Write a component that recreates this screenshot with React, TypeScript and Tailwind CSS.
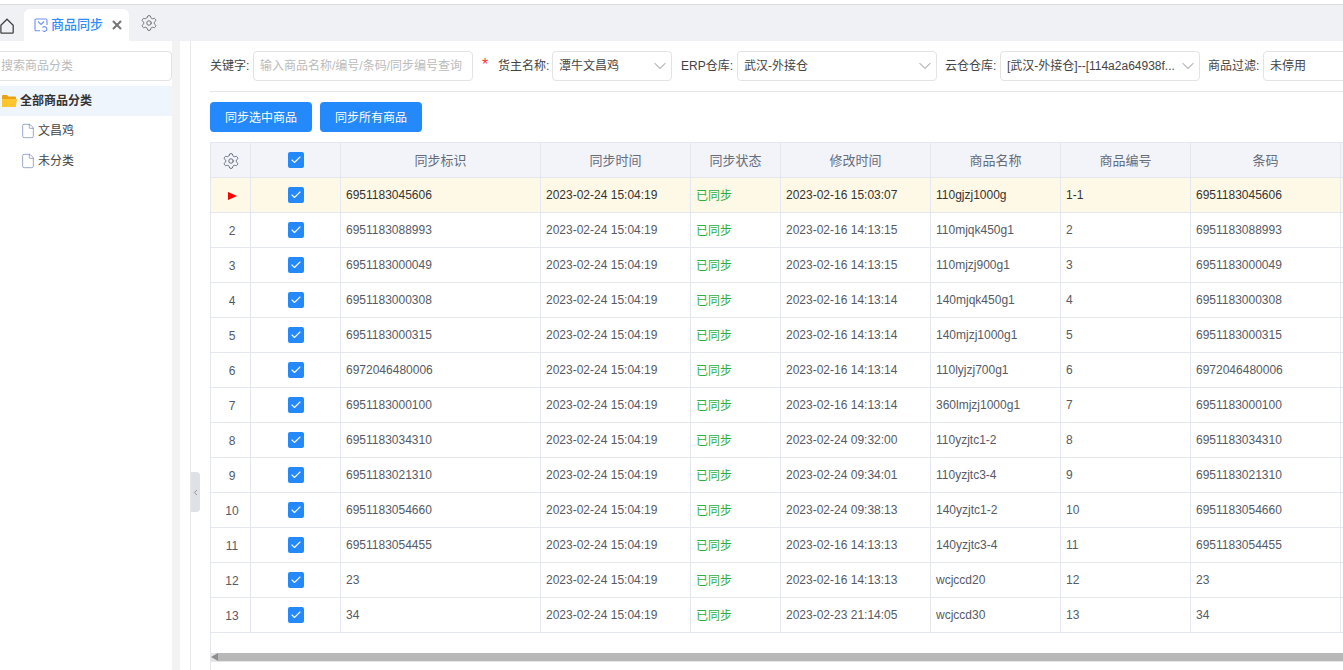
import { Check, ChevronDown, ChevronLeft, File, Settings, X } from "lucide-react";

const font = "font-['Liberation_Sans','Noto_Sans_CJK_SC',sans-serif]";

const rows = [
  ["6951183045606", "2023-02-16 15:03:07", "110gjzj1000g", "1-1", "6951183045606"],
  ["6951183088993", "2023-02-16 14:13:15", "110mjqk450g1", "2", "6951183088993"],
  ["6951183000049", "2023-02-16 14:13:15", "110mjzj900g1", "3", "6951183000049"],
  ["6951183000308", "2023-02-16 14:13:14", "140mjqk450g1", "4", "6951183000308"],
  ["6951183000315", "2023-02-16 14:13:14", "140mjzj1000g1", "5", "6951183000315"],
  ["6972046480006", "2023-02-16 14:13:14", "110lyjzj700g1", "6", "6972046480006"],
  ["6951183000100", "2023-02-16 14:13:14", "360lmjzj1000g1", "7", "6951183000100"],
  ["6951183034310", "2023-02-24 09:32:00", "110yzjtc1-2", "8", "6951183034310"],
  ["6951183021310", "2023-02-24 09:34:01", "110yzjtc3-4", "9", "6951183021310"],
  ["6951183054660", "2023-02-24 09:38:13", "140yzjtc1-2", "10", "6951183054660"],
  ["6951183054455", "2023-02-16 14:13:13", "140yzjtc3-4", "11", "6951183054455"],
  ["23", "2023-02-16 14:13:13", "wcjccd20", "12", "23"],
  ["34", "2023-02-23 21:14:05", "wcjccd30", "13", "34"],
];

const headers = ["同步标识", "同步时间", "同步状态", "修改时间", "商品名称", "商品编号", "条码"];

function Box() {
  return (
    <span className="mx-auto flex h-4 w-4 items-center justify-center rounded-[2px] bg-[#2489fb]">
      <Check size={12} strokeWidth={2.2} className="text-white" />
    </span>
  );
}

function Select({ value, width }: { value: string; width: string }) {
  return (
    <div className={`flex h-[30px] shrink-0 items-center justify-between rounded border border-[#e3e3e3] pl-[6px] pr-[1px] text-[#444] ${width}`}>
      <span className="truncate">{value}</span>
      <ChevronDown size={20} strokeWidth={0.9} className="shrink-0 text-[#666]" />
    </div>
  );
}

function Label({ text, width, className }: { text: string; width: string; className: string }) {
  return <span className={`flex h-[30px] shrink-0 items-center whitespace-nowrap ${width} ${className}`}>{text}</span>;
}

export default function App() {
  return (
    <div className={`flex h-[670px] w-[1343px] flex-col overflow-hidden bg-white text-xs text-[#555a66] ${font}`}>
      <div className="mt-1 flex h-[37px] shrink-0 border-t border-[#dcdcdc] bg-[#f0f1f5]">
        <svg width="15" height="16" viewBox="0 0 15 16" fill="none" stroke="#444" strokeWidth="1.3" className="mt-[13px] shrink-0">
          <path d="M0.9 7.2 7 1.2l6.2 6v7.2a.8.8 0 0 1-.8.8H1.7a.8.8 0 0 1-.8-.8z" />
        </svg>
        <div className="ml-[9px] mt-1 flex h-[32px] w-[105px] items-center rounded-t-md bg-white pl-[10px]">
          <svg width="14" height="14" viewBox="0 0 14 14" fill="none" stroke="#6f8ff5" strokeWidth="1.1" className="shrink-0">
            <path d="M6 12.8H2.2A1.2 1.2 0 0 1 1 11.6V2.2A1.2 1.2 0 0 1 2.2 1h9.6A1.2 1.2 0 0 1 13 2.2V7" />
            <path d="M4 3.5 7 6.5l3-3" />
            <path d="M8.5 9.5a2.5 2.5 0 0 1 4.4 1.5 2.5 2.5 0 0 1-4.4 1.5" />
          </svg>
          <span className="ml-[3px] text-[13px] font-medium text-[#2f8cff]">商品同步</span>
          <X size={14} strokeWidth={3.5} className="ml-[7px] text-[#777]" />
        </div>
        <Settings size={18} strokeWidth={1.2} className="ml-[11px] mt-[9px] text-[#666]" />
      </div>

      <div className="relative flex min-h-0 flex-1">
        <aside className="w-[172px] shrink-0 pt-[10px]">
          <div className="-ml-2 flex h-[30px] items-center rounded border border-[#e3e3e3] pl-[8px] text-[#bbb]">搜索商品分类</div>
          <div className="mt-[5px] flex h-[30px] items-center gap-[3px] bg-[#eff5fd] pl-[2px] font-bold text-[#333]">
            <svg width="15" height="12" viewBox="0 0 15 12" className="shrink-0">
              <path d="M0 1a1 1 0 0 1 1-1h4l1.5 1.5H13a1 1 0 0 1 1 1V4H0z" fill="#e8a317" />
              <path d="M0 4h15l-1.2 8H0z" fill="#ffc52e" />
            </svg>
            全部商品分类
          </div>
          <div className="flex h-[30px] items-center gap-[2px] pl-[20px] text-[#444]">
            <File size={16} strokeWidth={1} className="text-[#6b7fb0]" />
            文昌鸡
          </div>
          <div className="flex h-[30px] items-center gap-[2px] pl-[20px] text-[#444]">
            <File size={16} strokeWidth={1} className="text-[#6b7fb0]" />
            未分类
          </div>
        </aside>
        <div className="w-2 shrink-0 bg-[#f3f3f3]" />
        <div className="w-[11px] shrink-0 border-r border-[#e8e8e8]" />

        <div className="absolute left-[191px] top-[431px] flex h-10 w-[9px] items-center justify-center rounded-r-sm bg-[#dfe1e8]">
          <ChevronLeft size={9} strokeWidth={2} className="text-[#777]" />
        </div>

        <main className="flex min-w-0 flex-1 flex-col pl-[19px] pt-[10px]">
          <div className="flex h-[41px] shrink-0 items-start border-b border-[#e5e5e5] text-[#444]">
            <Label text="关键字:" width="w-[39px]" className="mr-1" />
            <div className="flex h-[30px] w-[220px] shrink-0 items-center whitespace-nowrap rounded border border-[#e3e3e3] pl-[6px] text-[#bbb]">输入商品名称/编号/条码/同步编号查询</div>
            <span className="ml-[9px] mr-2 mt-[2px] w-2 shrink-0 text-base text-[#f33]">*</span>
            <Label text="货主名称:" width="w-[51px]" className="mr-[3px]" />
            <Select value="潭牛文昌鸡" width="w-[120px]" />
            <Label text="ERP仓库:" width="w-[52px]" className="ml-[9px] mr-1" />
            <Select value="武汉-外接仓" width="w-[200px]" />
            <Label text="云仓仓库:" width="w-[51px]" className="ml-2 mr-1" />
            <Select value="[武汉-外接仓]--[114a2a64938f..." width="w-[200px]" />
            <Label text="商品过滤:" width="w-[52px]" className="ml-2 mr-[3px]" />
            <div className="flex h-[30px] w-[100px] shrink-0 items-center rounded border border-[#e3e3e3] pl-[6px]">未停用</div>
          </div>

          <div className="mt-[10px] flex shrink-0 gap-2">
            <button className="h-[30px] w-[102px] rounded-sm bg-[#2489fb] pt-[2px] text-white">同步选中商品</button>
            <button className="h-[30px] w-[102px] rounded-sm bg-[#2489fb] pt-[2px] text-white">同步所有商品</button>
          </div>

          <div className="mt-[10px] flex-1 border-l border-[#e4e7f0]">
            <table className="-ml-px w-[1200px] table-fixed border-collapse">
              <colgroup>
                <col className="w-[40px]" />
                <col className="w-[90px]" />
                <col className="w-[200px]" />
                <col className="w-[150px]" />
                <col className="w-[90px]" />
                <col className="w-[150px]" />
                <col className="w-[130px]" />
                <col className="w-[130px]" />
                <col className="w-[150px]" />
                <col className="w-[70px]" />
              </colgroup>
              <thead>
                <tr className="h-[35px] bg-[#f2f4fa] text-[13px] text-[#666c7a]">
                  <th className="border border-[#e4e7f0] pt-[2px] font-normal">
                    <Settings size={18} strokeWidth={1.2} className="mx-auto text-[#5a6070]" />
                  </th>
                  <th className="border border-[#e4e7f0] font-normal">
                    <Box />
                  </th>
                  {headers.map((h) => (
                    <th key={h} className="border border-[#e4e7f0] pt-[2px] font-normal">{h}</th>
                  ))}
                  <th className="border border-[#e4e7f0]" />
                </tr>
              </thead>
              <tbody>
                {rows.map((r, i) => (
                  <tr key={i} className={i === 0 ? "h-[35px] bg-[#fef8e6] text-[#333]" : "h-[35px]"}>
                    <td className="border border-[#e4e7f0] pl-[3px] pt-[2px] text-center">
                      {i === 0 ? (
                        <svg width="9" height="8" viewBox="0 0 9 8" className="mx-auto">
                          <path d="M0 0 9 4 0 8z" fill="#f00" />
                        </svg>
                      ) : (
                        i + 1
                      )}
                    </td>
                    <td className="border border-[#e4e7f0]"><Box /></td>
                    <td className="border border-[#e4e7f0] px-[5px]">{r[0]}</td>
                    <td className="border border-[#e4e7f0] px-[5px]">2023-02-24 15:04:19</td>
                    <td className="border border-[#e4e7f0] px-[5px] pt-[2px] text-[#2fae3f]">已同步</td>
                    <td className="border border-[#e4e7f0] px-[5px]">{r[1]}</td>
                    <td className="border border-[#e4e7f0] px-[5px]">{r[2]}</td>
                    <td className="border border-[#e4e7f0] px-[5px]">{r[3]}</td>
                    <td className="border border-[#e4e7f0] px-[5px]">{r[4]}</td>
                    <td className="border border-[#e4e7f0]" />
                  </tr>
                ))}
              </tbody>
            </table>

            <div className="mt-5 flex h-[9px] items-start border-b border-[#e6e6e6] bg-[#b8b8b8]">
              <svg width="7" height="8" viewBox="0 0 7 8" className="shrink-0">
                <rect width="7" height="8" fill="#e4e4e4" />
                <path d="M0 4 7 0v8z" fill="#8f8f8f" />
              </svg>
            </div>
          </div>
        </main>
      </div>
    </div>
  );
}
